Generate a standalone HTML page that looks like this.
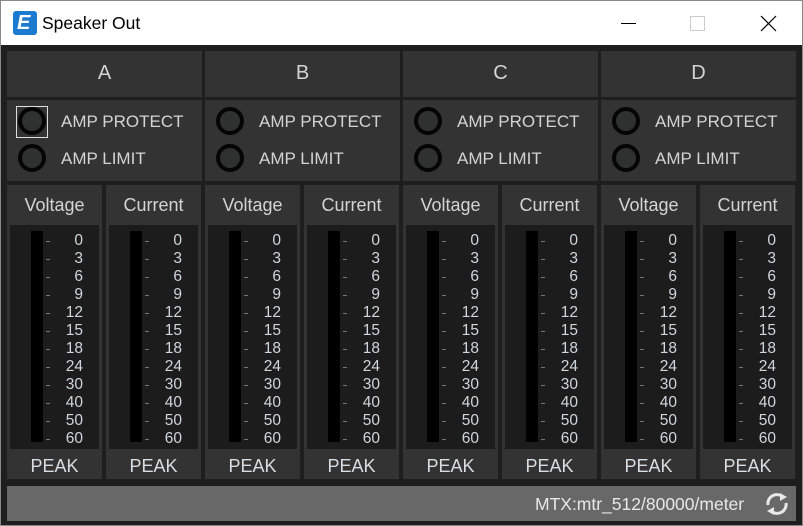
<!DOCTYPE html>
<html><head><meta charset="utf-8"><style>
*{margin:0;padding:0;box-sizing:border-box}
body{width:803px;height:526px;overflow:hidden;background:#1e1e1e;font-family:"Liberation Sans","DejaVu Sans",sans-serif;position:relative}
.a{position:absolute}
#title{left:0;top:0;width:803px;height:45px;background:#fff;border:1px solid #888;border-bottom:none}
.pn{background:#333333}
.t{color:#d4d4d4;font-size:18px;white-space:nowrap}
.n{color:#cfd6de;font-size:15.5px;text-align:right;width:30px;line-height:18px}
.led{width:28px;height:28px;border-radius:50%;border:4px solid #050505;background:#2e3130}
</style></head><body>
<div id="title" class="a">
 <div class="a" style="left:12px;top:10px;width:24px;height:24px;background:#1b7bd0;border-radius:3px"></div>
 <div class="a" style="left:16px;top:12px;color:#fff;font:italic bold 20px 'Liberation Sans',sans-serif;line-height:20px">E</div>
 <div class="a" style="left:41px;top:12px;font-size:17.5px;color:#000">Speaker Out</div>
 <div class="a" style="left:620px;top:22px;width:15px;height:1px;background:#000"></div>
 <div class="a" style="left:689px;top:15px;width:15px;height:15px;border:1px solid #ccc"></div>
 <svg class="a" style="left:759px;top:14px" width="17" height="17"><path d="M1 1L16 16M16 1L1 16" stroke="#000" stroke-width="1.2"/></svg>
</div>
<div class="a" style="left:0;top:45px;width:803px;height:481px;border:1px solid #888;border-top:none"></div>
<div id="c"></div>
<div class="a" style="left:7px;top:486px;width:789px;height:35px;background:#686868"></div>
<div class="a t" style="left:535px;top:494px;font-size:17.5px;color:#e8e8e8">MTX:mtr_512/80000/meter</div>
<svg class="a" style="left:763px;top:490px" width="28" height="28" viewBox="0 0 28 28"><path d="M5 15A9 9 0 0 1 20 7" stroke="#e8e8e8" stroke-width="3" fill="none"/><path d="M17 3L24 7L17 11Z" fill="#e8e8e8"/><path d="M23 13A9 9 0 0 1 8 21" stroke="#e8e8e8" stroke-width="3" fill="none"/><path d="M11 25L4 21L11 17Z" fill="#e8e8e8"/></svg>
<script>
var h='',L=['A','B','C','D'],nums=[0,3,6,9,12,15,18,24,30,40,50,60];
for(var i=0;i<4;i++){var x=7+198*i;
h+='<div class="a pn" style="left:'+x+'px;top:51px;width:195px;height:46px"></div>';
h+='<div class="a t" style="left:'+x+'px;top:62px;width:195px;text-align:center;font-size:20px">'+L[i]+'</div>';
h+='<div class="a pn" style="left:'+x+'px;top:100px;width:195px;height:81px"></div>';
h+='<div class="a led" style="left:'+(x+11)+'px;top:107px"></div><div class="a led" style="left:'+(x+11)+'px;top:144px"></div>';
if(i==0)h+='<div class="a" style="left:16px;top:106px;width:32px;height:32px;border:1px solid #ddd"></div>';
h+='<div class="a t" style="left:'+(x+54)+'px;top:112px;font-size:17px">AMP PROTECT</div><div class="a t" style="left:'+(x+54)+'px;top:149px;font-size:17px">AMP LIMIT</div>';
for(var j=0;j<2;j++){var sx=x+j*99;
h+='<div class="a pn" style="left:'+sx+'px;top:185px;width:95px;height:294px"></div>';
h+='<div class="a t" style="left:'+sx+'px;top:195px;width:95px;text-align:center">'+(j?'Current':'Voltage')+'</div>';
h+='<div class="a" style="left:'+(sx+3)+'px;top:225px;width:89px;height:224px;background:#1c1c1c"></div>';
h+='<div class="a" style="left:'+(sx+24)+'px;top:231px;width:12px;height:211px;background:#000"></div>';
for(var k=0;k<12;k++){var y=232+18*k;
h+='<div class="a" style="left:'+(sx+39)+'px;top:'+(y+9)+'px;width:4px;height:1px;background:#777"></div>';
h+='<div class="a n" style="left:'+(sx+46)+'px;top:'+y+'px">'+nums[k]+'</div>';}
h+='<div class="a t" style="left:'+sx+'px;top:456px;width:95px;text-align:center;color:#d8dde2">PEAK</div>';}}
document.getElementById('c').innerHTML=h;
</script>
</body></html>
